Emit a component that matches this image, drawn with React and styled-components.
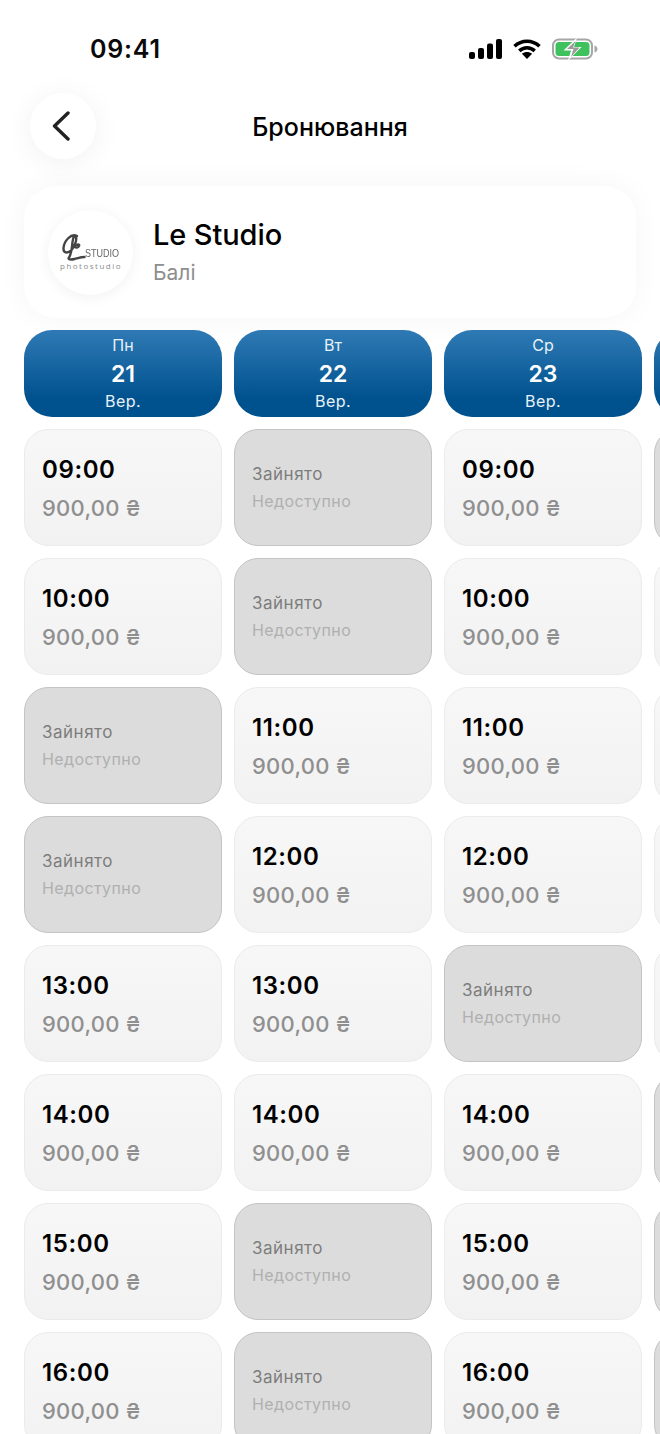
import React from "react";
import styled, { createGlobalStyle } from "styled-components";

const Global = createGlobalStyle`
  html, body { margin: 0; padding: 0; background: #fff; }
  body { font-family: Inter, "Noto Sans", "Liberation Sans", sans-serif; }
`;

const Page = styled.div`
  width: 660px;
  height: 1434px;
  overflow: hidden;
  background: #fff;
`;

const StatusBar = styled.div`
  height: 93px;
  box-sizing: border-box;
  padding: 34px 62px 0 90px;
  display: flex;
  justify-content: space-between;
  align-items: flex-start;
`;

const Clock = styled.div`
  font-size: 25px;
  line-height: 30px;
  font-weight: 600;
  color: #0a0a0a;
  letter-spacing: 0.8px;
`;

const StatusIcons = styled.div`
  display: flex;
  align-items: center;
  gap: 11px;
  padding-top: 3px;
  margin-left: -2px;
`;

const Header = styled.div`
  display: grid;
  grid-template-columns: 66px 1fr 66px;
  align-items: center;
  padding: 0 30px;
  height: 66px;
`;

const BackButton = styled.div`
  width: 66px;
  height: 66px;
  border-radius: 50%;
  background: #fff;
  box-shadow: 0 4px 30px rgba(0, 0, 0, 0.06);
  display: flex;
  align-items: center;
  justify-content: center;
  padding-right: 4px;
  box-sizing: border-box;
`;

const Title = styled.div`
  text-align: center;
  font-size: 25px;
  line-height: 30px;
  font-weight: 500;
  color: #000;
  margin-top: 2px;
`;

const InfoCard = styled.div`
  margin: 27px 24px 12px;
  height: 132px;
  box-sizing: border-box;
  padding: 0 24px;
  border-radius: 32px;
  background: #fff;
  box-shadow: 0 0 30px rgba(0, 0, 0, 0.045);
  display: flex;
  align-items: center;
  gap: 21px;
`;

const LogoCircle = styled.div`
  width: 85px;
  height: 85px;
  border-radius: 50%;
  background: #fff;
  box-shadow: 0 2px 14px rgba(0, 0, 0, 0.06);
  position: relative;
  flex: none;
  margin-right: -1px;
`;

const LogoMark = styled.svg`
  position: absolute;
  left: 12px;
  top: 22px;
  filter: blur(0.4px);
`;

const LogoStudio = styled.span`
  position: absolute;
  left: 37px;
  top: 37px;
  font-family: "Liberation Sans", sans-serif;
  font-size: 11px;
  line-height: 13px;
  color: #666;
  transform: scaleX(0.82);
  transform-origin: left center;
`;

const LogoSub = styled.span`
  position: absolute;
  left: 12px;
  top: 51px;
  font-family: "Open Sans", sans-serif;
  font-size: 8px;
  line-height: 10px;
  letter-spacing: 1.5px;
  color: #8c8c8c;
`;

const InfoText = styled.div`
  display: flex;
  flex-direction: column;
  gap: 9px;
  margin-top: -2px;
`;

const StudioName = styled.div`
  font-size: 29px;
  line-height: 35px;
  font-weight: 500;
  color: #000;
  letter-spacing: -0.1px;
`;

const StudioCity = styled.div`
  font-size: 21px;
  line-height: 24px;
  color: #8e8e8e;
`;

const Columns = styled.div`
  display: grid;
  grid-auto-flow: column;
  grid-auto-columns: 198px;
  column-gap: 12px;
  padding-left: 24px;
`;

const Column = styled.div`
  display: flex;
  flex-direction: column;
  gap: 12px;
`;

const DayHeader = styled.div`
  height: 87px;
  box-sizing: border-box;
  padding-top: 6px;
  border-radius: 28px;
  background: linear-gradient(180deg, #2f7ab5 0%, #00528f 78%, #00528f 100%);
  color: #fff;
  display: flex;
  flex-direction: column;
  align-items: center;
`;

const DayName = styled.div`
  font-size: 16px;
  line-height: 18px;
  color: #e9f1f8;
`;

const DayNumber = styled.div`
  font-size: 23px;
  line-height: 26px;
  margin-top: 7px;
  font-weight: 600;
`;

const DayMonth = styled.div`
  font-size: 16px;
  line-height: 18px;
  margin-top: 5px;
  letter-spacing: 0.4px;
  color: #e9f1f8;
`;

const Slot = styled.div`
  height: 117px;
  box-sizing: border-box;
  flex: none;
  border-radius: 24px;
  padding-left: 17px;
  display: flex;
  flex-direction: column;
  border: 1.5px solid ${(p) => (p.$busy ? "#c4c4c4" : "#ebebeb")};
  background: ${(p) => (p.$busy ? "#dcdcdc" : "linear-gradient(180deg, #f7f7f7 0%, #f2f2f2 100%)")};
`;

const SlotTime = styled.div`
  margin-top: 25px;
  font-size: 24px;
  line-height: 30px;
  font-weight: 600;
  color: #000;
  letter-spacing: 0.6px;
`;

const SlotPrice = styled.div`
  margin-top: 8px;
  font-size: 22px;
  line-height: 30px;
  font-weight: 500;
  color: #8f8f8f;
  letter-spacing: 0.25px;
`;

const BusyLabel = styled.div`
  margin-top: 33px;
  font-size: 17px;
  line-height: 22px;
  color: #7d7d7d;
  letter-spacing: 0.5px;
`;

const BusyNote = styled.div`
  margin-top: 6px;
  font-size: 16px;
  line-height: 20px;
  color: #b0b0b0;
  letter-spacing: 0.4px;
`;

const SignalIcon = () => (
  <svg width="33" height="20" viewBox="0 0 33 20">
    <rect x="0" y="13" width="6" height="7" rx="2" fill="#000" />
    <rect x="9" y="9" width="6" height="11" rx="2" fill="#000" />
    <rect x="18" y="4.500" width="6" height="15.500" rx="2" fill="#000" />
    <rect x="27" y="0" width="6" height="20" rx="2" fill="#000" />
  </svg>
);

const WifiIcon = () => (
  <svg width="28" height="20" viewBox="0 0 28 20">
    <path d="M1.500 7.300C8.600 .6 19.400 .6 26.500 7.300" fill="none" stroke="#000" strokeWidth="3.600" />
    <path d="M6.300 11.800C10.800 7.700 17.200 7.700 21.700 11.800" fill="none" stroke="#000" strokeWidth="3.600" />
    <path d="M14 20L8.900 14.700C11.900 12.300 16.100 12.300 19.100 14.700Z" fill="#000" />
  </svg>
);

const BatteryIcon = () => (
  <svg width="46" height="24" viewBox="0 0 46 24">
    <rect x="1" y="2.500" width="39" height="19" rx="6" fill="none" stroke="#a6a6a6" strokeWidth="2" />
    <path d="M42.500 8.500c2 .6 3 2 3 3.500s-1 2.900-3 3.500z" fill="#a6a6a6" />
    <rect x="3.500" y="5" width="34" height="14" rx="3.500" fill="#3fc25e" />
    <path d="M25 0.500L11.500 13.500h7.500l-3 10L29.500 10h-7.500z" fill="#fff" />
    <path d="M23.500 4L15 12h6.500l-2.500 8 8.500-9.500h-6.500z" fill="#9a9a9a" />
  </svg>
);

const BackIcon = () => (
  <svg width="20" height="30" viewBox="0 0 20 30">
    <path d="M17 2L3.500 15 17 28" fill="none" stroke="#222" strokeWidth="3.400" strokeLinecap="round" strokeLinejoin="round" />
  </svg>
);

const ScriptMark = () => (
  <LogoMark width="30" height="36" viewBox="0 0 30 36">
    <path
      d="M17 4C11 1 4 9 3.500 16c-.4 5 4 6 8 2 3-3.500 5.500-10 4.500-13-1-3-3 0-3.500 5-.5 5-1 12-3.500 15.500-1.500 2 1.500 2.500 5.500 1.500 4-1 7-2 10-2M15 14c2-2 5-2 4 0s-3 2-4 1"
      fill="none"
      stroke="#444"
      strokeWidth="2.400"
      strokeLinecap="round"
    />
  </LogoMark>
);

const DAYS = [
  { name: "Пн", num: 21, busy: [2, 3] },
  { name: "Вт", num: 22, busy: [0, 1, 6, 7] },
  { name: "Ср", num: 23, busy: [4] },
  { name: "Чт", num: 24, busy: [0, 5, 6, 7] },
];

const HOURS = ["09:00", "10:00", "11:00", "12:00", "13:00", "14:00", "15:00", "16:00"];

export default function App() {
  return (
    <Page>
      <Global />
      <StatusBar>
        <Clock>09:41</Clock>
        <StatusIcons>
          <SignalIcon />
          <WifiIcon />
          <BatteryIcon />
        </StatusIcons>
      </StatusBar>
      <Header>
        <BackButton>
          <BackIcon />
        </BackButton>
        <Title>Бронювання</Title>
      </Header>
      <InfoCard>
        <LogoCircle>
          <ScriptMark />
          <LogoStudio>STUDIO</LogoStudio>
          <LogoSub>photostudio</LogoSub>
        </LogoCircle>
        <InfoText>
          <StudioName>Le Studio</StudioName>
          <StudioCity>Балі</StudioCity>
        </InfoText>
      </InfoCard>
      <Columns>
        {DAYS.map((d) => (
          <Column key={d.num}>
            <DayHeader>
              <DayName>{d.name}</DayName>
              <DayNumber>{d.num}</DayNumber>
              <DayMonth>Вер.</DayMonth>
            </DayHeader>
            {HOURS.map((h, i) =>
              d.busy.includes(i) ? (
                <Slot key={h} $busy>
                  <BusyLabel>Зайнято</BusyLabel>
                  <BusyNote>Недоступно</BusyNote>
                </Slot>
              ) : (
                <Slot key={h}>
                  <SlotTime>{h}</SlotTime>
                  <SlotPrice>900,00 ₴</SlotPrice>
                </Slot>
              )
            )}
          </Column>
        ))}
      </Columns>
    </Page>
  );
}
